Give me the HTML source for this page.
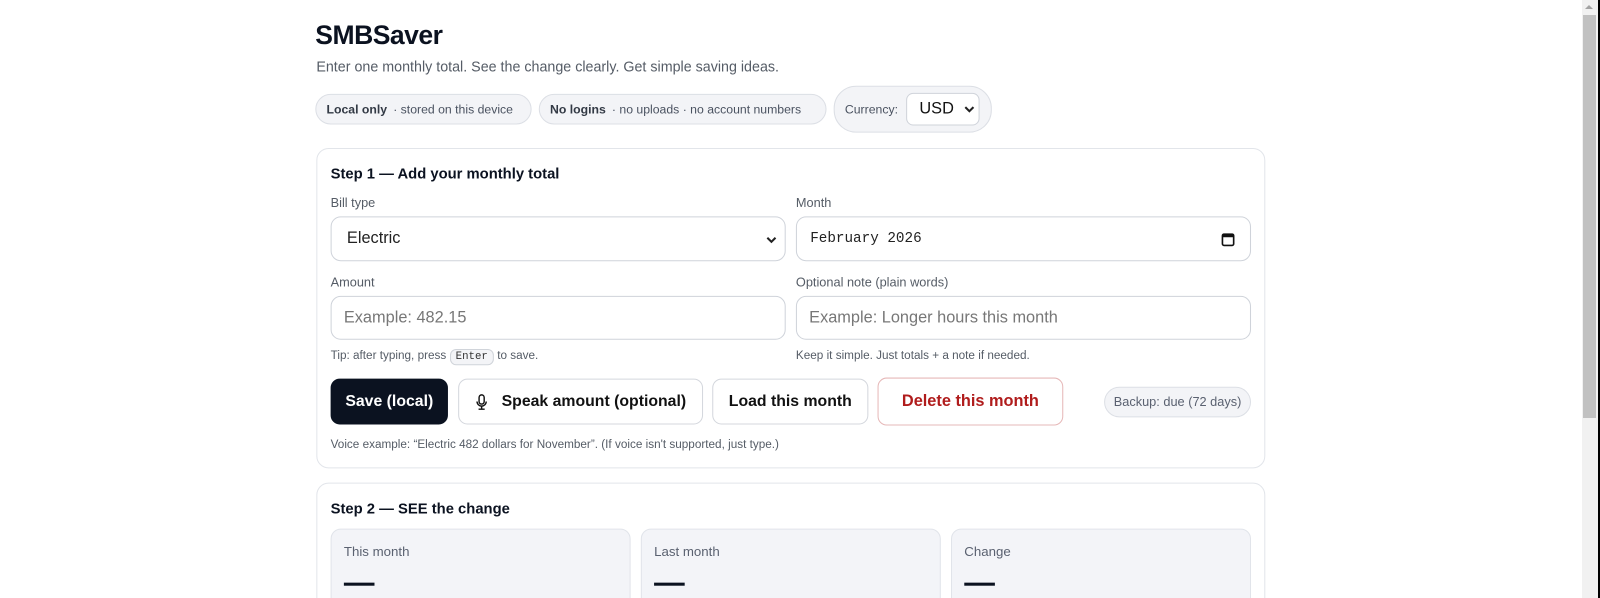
<!DOCTYPE html>
<html><head><meta charset="utf-8">
<style>
html,body{margin:0;padding:0;background:#fff;width:1600px;height:598px;overflow:hidden;font-family:"Liberation Sans",Arial,sans-serif;color:#0f172a}
#w{position:absolute;left:0;top:0;width:1568px;height:586px;overflow:hidden;transform:scale(1.0204);transform-origin:0 0}
.a{position:absolute}
h1{position:absolute;left:309px;top:19px;margin:0;font-size:26px;font-weight:700;letter-spacing:-0.5px;color:#0b1220}
.sub{left:310px;top:57px;font-size:14px;color:#555c66}
.pill{position:absolute;border:1px solid #dcdfe5;background:#f3f4f7;border-radius:16px;font-size:12px;color:#4a5260;box-sizing:border-box;display:flex;align-items:center;padding:0 10px;white-space:nowrap}
.pill b{color:#333a45;margin-right:6px}
.card{position:absolute;left:310px;width:930px;border:1px solid #e2e5ea;border-radius:12px;box-sizing:border-box;background:#fff}
.h2{font-size:14.5px;font-weight:700;color:#0b1220}
.lbl{font-size:12.5px;color:#555c66}
.inp{position:absolute;border:1px solid #cfd3da;border-radius:10px;box-sizing:border-box;background:#fff;display:flex;align-items:center;padding:0 15px;font-size:16px;color:#222}
.btn{position:absolute;top:371px;height:45px;border-radius:9px;box-sizing:border-box;display:flex;align-items:center;justify-content:center;font-size:15.5px;font-weight:700;border:1px solid #d4d7dd;background:#fff;color:#111}
.stat{position:absolute;top:518px;height:120px;border:1px solid #e1e4ea;background:#f3f4f8;border-radius:10px;box-sizing:border-box}
.stat span{position:absolute;left:12px;top:14px;font-size:13px;color:#5a6170}
.stat i{position:absolute;left:12px;top:52px;width:30px;height:3px;background:#0b1220}
.kbd{display:inline-block;border:1px solid #d0d4da;background:#f3f4f7;border-radius:6px;font-family:"Liberation Mono",monospace;font-size:10.5px;padding:1px 5px;color:#333}
</style></head><body>
<div id="w">
<h1>SMBSaver</h1>
<div class="a sub">Enter one monthly total. See the change clearly. Get simple saving ideas.</div>
<div class="pill" style="left:309px;top:92px;width:212px;height:30px"><b>Local only</b> · stored on this device</div>
<div class="pill" style="left:528px;top:92px;width:282px;height:30px"><b>No logins</b> · no uploads · no account numbers</div>
<div class="pill" style="left:817px;top:84px;width:155px;height:46px;border-radius:22px">Currency:
 <div style="margin-left:8px;border:1px solid #cfd3da;background:#fff;border-radius:7px;width:72px;height:32px;box-sizing:border-box;display:flex;align-items:center;padding-left:12px;font-size:16px;color:#111">USD <svg style="margin-left:10px" width="10" height="8" viewBox="0 0 10 8"><path d="M1 2l4 4 4-4" stroke="#222" stroke-width="2" fill="none"/></svg></div></div>

<div class="card" style="top:145px;height:314px"></div>
<div class="a h2" style="left:324px;top:163px">Step 1 — Add your monthly total</div>
<div class="a lbl" style="left:324px;top:192px">Bill type</div>
<div class="a lbl" style="left:780px;top:192px">Month</div>
<div class="inp" style="left:324px;top:212px;width:446px;height:44px">Electric<svg style="position:absolute;right:8px;top:18px" width="10" height="8" viewBox="0 0 10 8"><path d="M1 2l4 4 4-4" stroke="#222" stroke-width="2" fill="none"/></svg></div>
<div class="inp" style="left:780px;top:212px;width:446px;height:44px;font-family:'Liberation Mono',monospace;font-size:14px;padding-left:13px">February 2026<svg style="position:absolute;right:15px;top:15px" width="13" height="14" viewBox="0 0 13 14"><rect x="1" y="1.5" width="11" height="11" rx="1.5" stroke="#111" stroke-width="1.6" fill="none"/><rect x="1" y="1.5" width="11" height="3" fill="#111"/></svg></div>
<div class="a lbl" style="left:324px;top:270px">Amount</div>
<div class="a lbl" style="left:780px;top:270px">Optional note (plain words)</div>
<div class="inp" style="left:324px;top:290px;width:446px;height:43px;color:#777;padding-left:12px">Example: 482.15</div>
<div class="inp" style="left:780px;top:290px;width:446px;height:43px;color:#777;padding-left:12px">Example: Longer hours this month</div>
<div class="a" style="left:324px;top:342px;font-size:11.5px;color:#555c66">Tip: after typing, press <span class="kbd">Enter</span> to save.</div>
<div class="a" style="left:780px;top:343px;font-size:11.5px;color:#555c66">Keep it simple. Just totals + a note if needed.</div>
<div class="btn" style="left:324px;width:115px;background:#0b1220;color:#fff;border-color:#0b1220">Save (local)</div>
<div class="btn" style="left:449px;width:240px"><svg width="12" height="16" viewBox="0 0 12 16" style="margin-right:14px"><rect x="3.5" y="1" width="5" height="9" rx="2.5" stroke="#111" stroke-width="1.4" fill="none"/><path d="M1.5 7.5a4.5 4.5 0 0 0 9 0M6 12v3M3 15h6" stroke="#111" stroke-width="1.4" fill="none"/></svg>Speak amount (optional)</div>
<div class="btn" style="left:698px;width:153px">Load this month</div>
<div class="btn" style="left:860px;width:182px;height:47px;top:370px;color:#b01c1c;border-color:#e6b8b8;font-size:16px">Delete this month</div>
<div class="pill" style="left:1082px;top:379px;width:144px;height:30px;font-size:12.5px;color:#5a6170;justify-content:center">Backup: due (72 days)</div>
<div class="a" style="left:324px;top:430px;font-size:11.5px;color:#555c66">Voice example: “Electric 482 dollars for November”. (If voice isn't supported, just type.)</div>

<div class="card" style="top:473px;height:200px"></div>
<div class="a h2" style="left:324px;top:491px">Step 2 — SEE the change</div>
<div class="stat" style="left:324px;width:294px"><span>This month</span><i></i></div>
<div class="stat" style="left:628px;width:294px"><span>Last month</span><i></i></div>
<div class="stat" style="left:932px;width:294px"><span>Change</span><i></i></div>
</div>
<div style="position:absolute;left:1582px;top:0;width:16px;height:598px;background:#f1f1f1"></div>
<div style="position:absolute;left:1583px;top:15px;width:13px;height:403px;background:#c1c1c1"></div>
<div style="position:absolute;left:1585px;top:5px;width:0;height:0;border-left:4px solid transparent;border-right:4px solid transparent;border-bottom:4px solid #a3a3a3"></div>
<div style="position:absolute;left:1598px;top:0;width:2px;height:598px;background:#000"></div>
</body></html>
